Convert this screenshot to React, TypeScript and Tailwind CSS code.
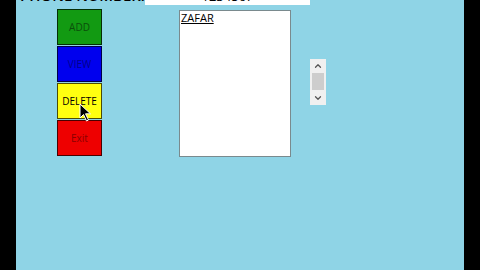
import { ChevronUp, ChevronDown } from 'lucide-react'

const font = { fontFamily: '"Open Sans", "Liberation Sans", sans-serif' }

function Btn({ label, cls }: { label: string; cls: string }) {
  return (
    <div className={`h-[36px] w-[45px] border border-black/70 flex items-center justify-center text-[10px] ${cls}`}>
      {label}
    </div>
  )
}

export default function App() {
  return (
    <div className="w-[480px] h-[270px] bg-black flex overflow-hidden" style={font}>
      <div className="ml-[16px] w-[448px] h-full bg-[#8fd4e6] relative">
        <div className="h-[5px] flex items-end overflow-hidden">
          <div className="ml-[4px] w-[125px] text-[15px] font-semibold leading-none text-black whitespace-nowrap translate-y-[-2px]">
            PHONE NUMBER:
          </div>
          <div className="w-[165px] h-[5px] bg-white flex items-end justify-center overflow-hidden">
            <span className="text-[13px] leading-none text-black translate-y-[-2px]">1234567</span>
          </div>
        </div>

        <div className="flex items-start">
          <div className="ml-[41px] mt-[4px] flex flex-col gap-[1px]">
            <Btn label="ADD" cls="bg-[#129a12] text-[#0b4f0b]" />
            <Btn label="VIEW" cls="bg-[#0000ee] text-[#00008a]" />
            <Btn label="DELETE" cls="bg-[#ffff10] text-black" />
            <Btn label="Exit" cls="bg-[#ee0000] text-[#8a0000]" />
          </div>
          <div className="ml-[77px] mt-[5px] w-[112px] h-[147px] bg-white border border-[#7a8a8e] px-[1px] text-[11px] leading-[13px]">
            <div className="underline text-black">ZAFAR</div>
          </div>
          <div className="ml-[19px] mt-[54px] w-[16px] h-[46px] bg-[#f0f0f0] flex flex-col items-center">
            <ChevronUp className="w-[10px] h-[10px] mt-[2px] text-[#555]" strokeWidth={3} />
            <div className="w-[12px] h-[17px] bg-[#cdcdcd] mt-[2px]" />
            <ChevronDown className="w-[10px] h-[10px] mt-[3px] text-[#555]" strokeWidth={3} />
          </div>
        </div>

        <svg className="absolute left-[63px] top-[103px]" width="13" height="19" viewBox="0 0 13 19">
          <path d="M1 1 L1 15 L4.5 11.5 L7.5 18 L9.5 17 L6.5 10.8 L11.5 10.8 Z" fill="black" stroke="white" strokeWidth="1" />
        </svg>
      </div>
    </div>
  )
}
